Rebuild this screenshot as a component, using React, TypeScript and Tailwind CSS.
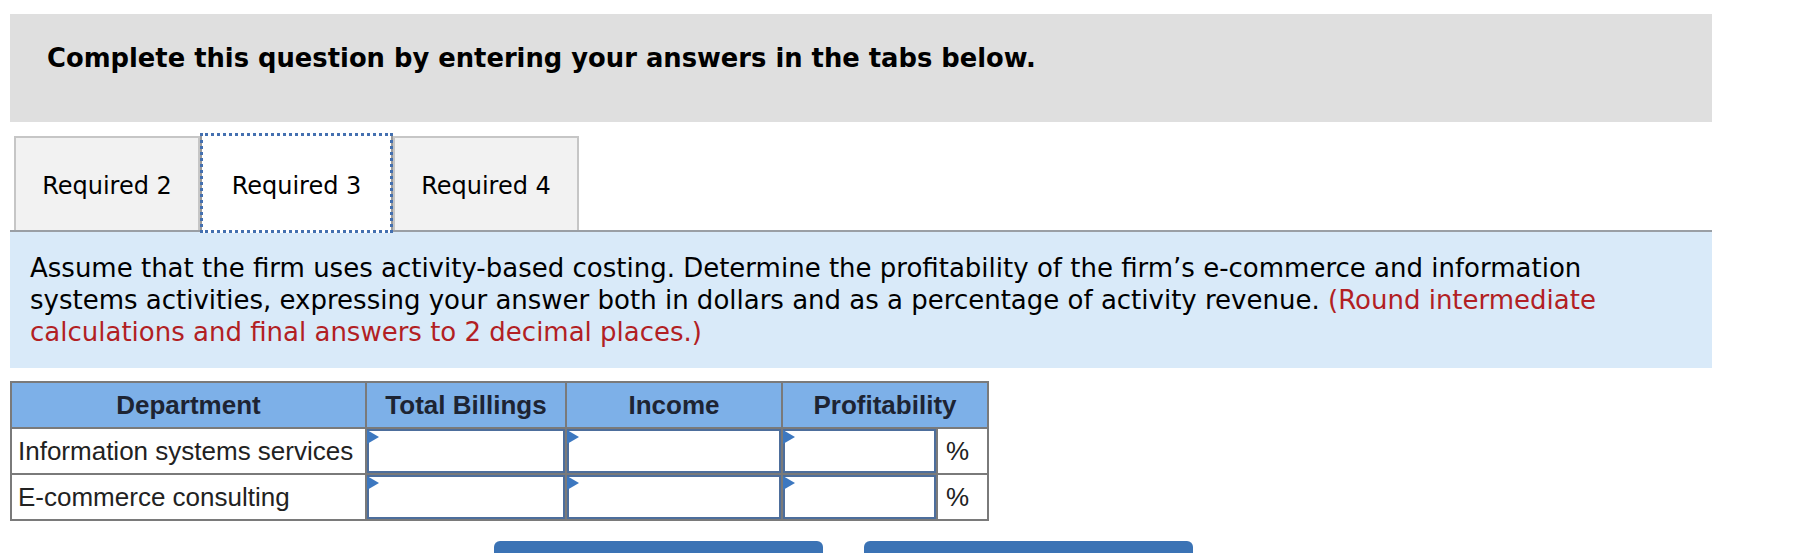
import React from "react";

const tahoma = { fontFamily: '"DejaVu Sans", Verdana, sans-serif' };
const arial = { fontFamily: '"Liberation Sans", Arial, sans-serif' };

const rows = ["Information systems services", "E-commerce consulting"];

function Tab({ label, active }: { label: string; active?: boolean }) {
  if (active) {
    return (
      <div className="relative z-10 -mb-[3px] flex h-[100px] w-[193px] items-center justify-center border-x-2 border-[#9a9a9a] bg-white pt-[6px] text-[24px] text-black outline-[3px] outline-dotted -outline-offset-[3px] outline-[#4470b0]">
        {label}
      </div>
    );
  }
  return (
    <div className="flex h-[94px] w-[186px] items-center justify-center border-2 border-b-0 border-[#c6c6c6] bg-[#f2f2f2] pt-[4px] text-[24px] text-black">
      {label}
    </div>
  );
}

function Marker() {
  return (
    <div className="absolute -left-[2px] -top-[1px] h-0 w-0 border-y-[7px] border-l-[12px] border-y-transparent border-l-[#3d78c0]" />
  );
}

function InputCell({ width }: { width: string }) {
  return (
    <td className={`${width} h-[46px] border-2 border-[#7a7a7a] p-0`}>
      <div className="relative h-[44px] w-full border-2 border-[#4d6e9c] bg-white">
        <Marker />
      </div>
    </td>
  );
}

export default function App() {
  return (
    <div className="min-h-screen bg-white pt-[14px]" style={tahoma}>
      <div className="mx-[10px] w-[1702px]">
        {/* Header */}
        <div className="h-[108px] bg-[#dfdfdf] pl-[37px] pt-[28px]">
          <h2 className="text-[25.8px] font-bold leading-[32px] text-black">
            Complete this question by entering your answers in the tabs below.
          </h2>
        </div>

        {/* Tabs */}
        <div className="mt-[11px] flex items-end border-b-2 border-[#9a9fa5] pl-[4px]">
          <Tab label="Required 2" />
          <Tab label="Required 3" active />
          <Tab label="Required 4" />
        </div>

        {/* Question */}
        <div className="h-[136px] bg-[#d9eaf9] pl-[20px] pr-[60px] pt-[20px]">
          <p className="text-[26px] leading-[32px] text-black">
            Assume that the firm uses activity-based costing. Determine the profitability of the firm’s e-commerce and
            information systems activities, expressing your answer both in dollars and as a percentage of activity revenue.{" "}
            <span className="text-[#b21f24]">(Round intermediate calculations and final answers to 2 decimal places.)</span>
          </p>
        </div>

        {/* Table */}
        <table className="mt-[13px] border-collapse border-2 border-[#7a7a7a] text-[26px]" style={arial}>
          <thead>
            <tr className="h-[46px] bg-[#7db0e8] text-[#1d2433]">
              <th className="w-[355px] border-2 border-[#7a7a7a] font-bold">Department</th>
              <th className="w-[200px] border-2 border-[#7a7a7a] font-bold">Total Billings</th>
              <th className="w-[216px] border-2 border-[#7a7a7a] font-bold">Income</th>
              <th colSpan={2} className="w-[206px] border-2 border-[#7a7a7a] font-bold">
                Profitability
              </th>
            </tr>
          </thead>
          <tbody>
            {rows.map((r) => (
              <tr key={r} className="h-[46px]">
                <td className="border-2 border-[#7a7a7a] px-[6px] leading-[30px] text-[#222]">{r}</td>
                <InputCell width="w-[200px]" />
                <InputCell width="w-[216px]" />
                <InputCell width="w-[155px]" />
                <td className="w-[51px] border-2 border-[#7a7a7a] px-[8px] text-[#222]">%</td>
              </tr>
            ))}
          </tbody>
        </table>

        {/* Navigation */}
        <div className="mt-[20px] flex gap-[41px] pl-[484px]">
          <button className="flex h-[52px] w-[329px] items-center justify-center rounded-md bg-[#3b73b5] text-[24px] text-white">
            ‹ Required 2
          </button>
          <button className="flex h-[52px] w-[329px] items-center justify-center rounded-md bg-[#3b73b5] text-[24px] text-white">
            Required 4 ›
          </button>
        </div>
      </div>
    </div>
  );
}
